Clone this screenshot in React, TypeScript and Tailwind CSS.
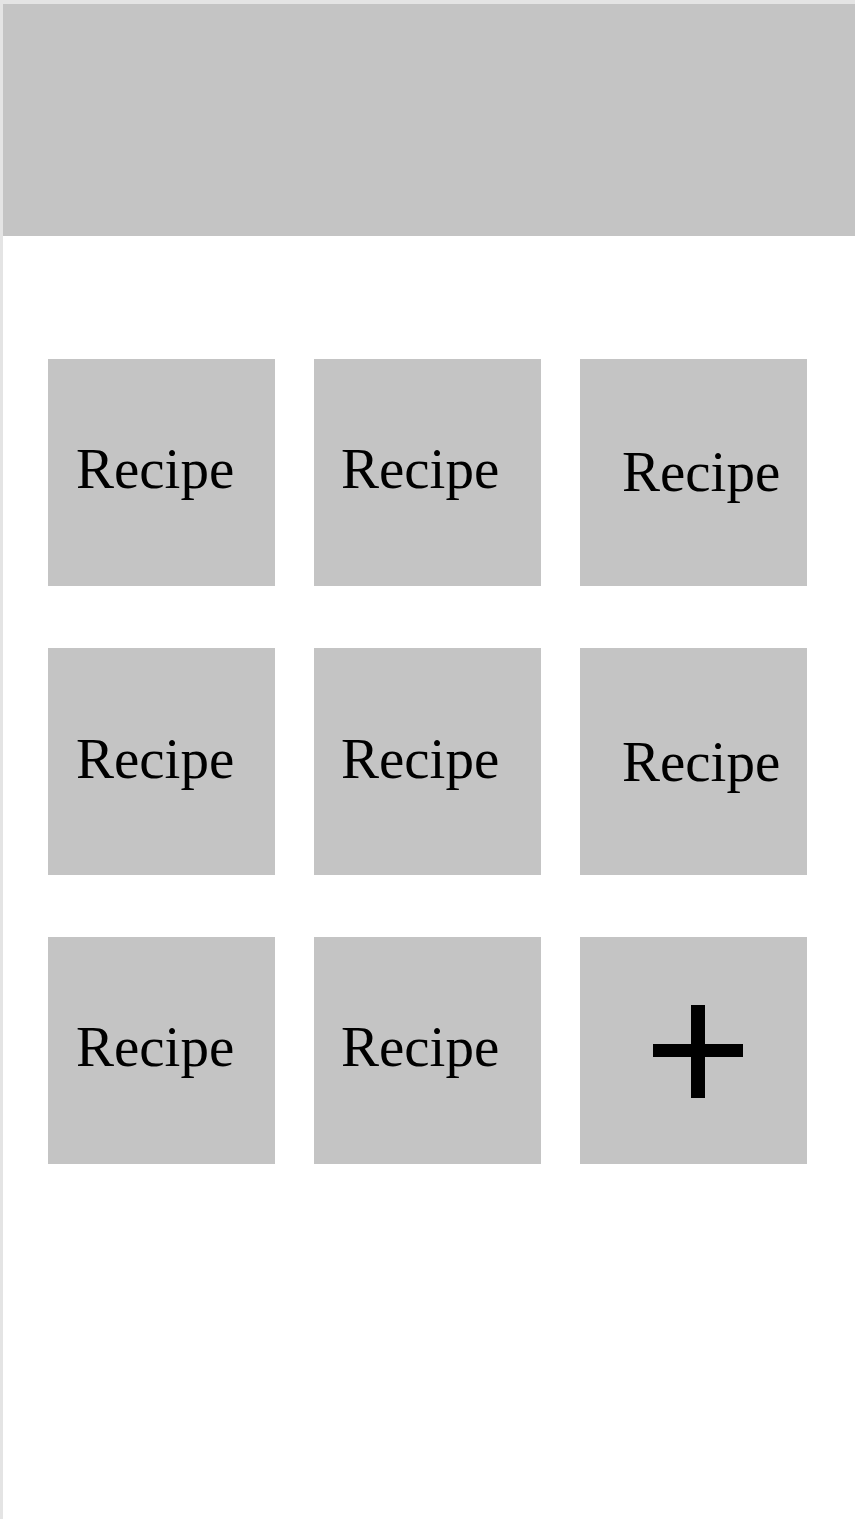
const cards = [
  { id: 1, offset: "pl-[28px] pt-[82px]" },
  { id: 2, offset: "pl-[27px] pt-[82px]" },
  { id: 3, offset: "pl-[42px] pt-[85px]" },
  { id: 4, offset: "pl-[28px] pt-[83px]" },
  { id: 5, offset: "pl-[27px] pt-[83px]" },
  { id: 6, offset: "pl-[42px] pt-[86px]" },
  { id: 7, offset: "pl-[28px] pt-[82px]" },
  { id: 8, offset: "pl-[27px] pt-[82px]" },
];

function PlusIcon() {
  return (
    <svg width="90" height="93" viewBox="0 0 90 93" className="block">
      <rect x="38" y="0" width="14" height="93" fill="#000" />
      <rect x="0" y="39" width="90" height="13" fill="#000" />
    </svg>
  );
}

export default function App() {
  return (
    <div className="min-h-[1519px] bg-white border-l-[3px] border-t-[4px] border-[#e4e4e4]">
      <header className="h-[232px] bg-[#c4c4c4]" />
      <main className="pl-[45px] pt-[123px] pb-20">
        <div className="grid grid-cols-[227px_227px_227px] gap-x-[39px] gap-y-[62px]">
          {cards.map((c) => (
            <div
              key={c.id}
              className={`h-[227px] bg-[#c4c4c4] ${c.offset} text-[57px] leading-[56px] text-black font-['Liberation_Serif',_'Times_New_Roman',_serif]`}
            >
              Recipe
            </div>
          ))}
          <button className="h-[227px] bg-[#c4c4c4] flex items-center justify-center pl-[8px] pt-[2px]">
            <PlusIcon />
          </button>
        </div>
      </main>
    </div>
  );
}
